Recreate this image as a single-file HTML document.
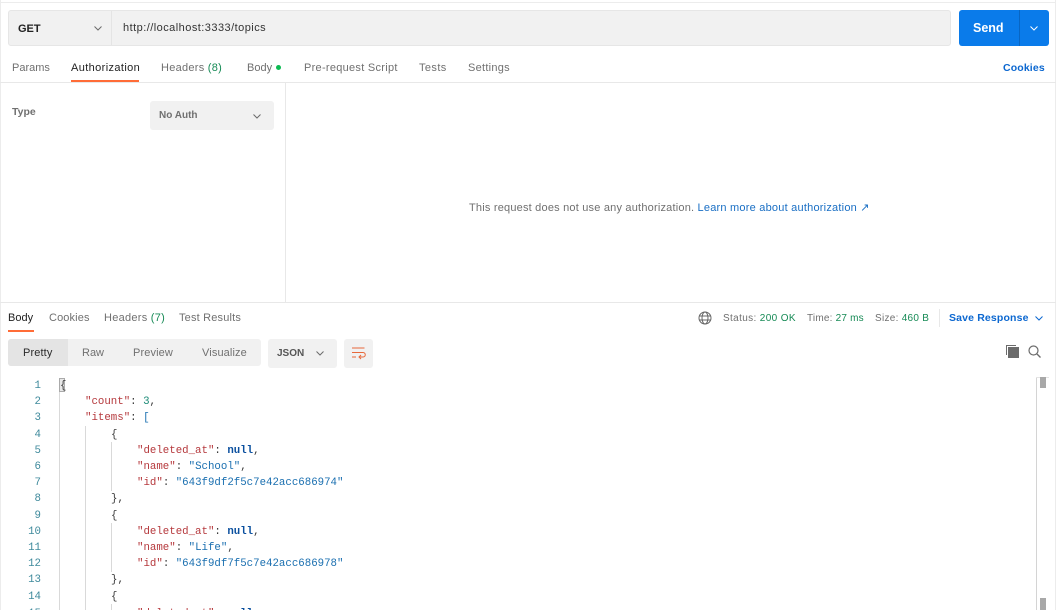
<!DOCTYPE html>
<html style="overflow:hidden"><head><meta charset="utf-8">
<style>
html,body{margin:0;padding:0;background:#fff}
#w{width:1058px;height:610px;position:relative;overflow:hidden;font-family:"Liberation Sans",sans-serif;font-size:11px;color:#707070}
.a{position:absolute;white-space:nowrap;line-height:14px}
.b{position:absolute}
.g{color:#168a55}
.code{position:absolute;white-space:pre;font-family:"Liberation Mono",monospace;font-size:10.75px;line-height:16px;color:#3a3a3a}
.n{position:absolute;width:41px;text-align:right;white-space:pre;font-family:"Liberation Mono",monospace;font-size:10.75px;line-height:16px;color:#3f8a9c}
.k{color:#b5383c}.s{color:#1a6fb0}.nl{color:#0a4f9e;font-weight:bold}.d{color:#1a8a76}
svg{position:absolute;overflow:visible}
</style></head><body><div id="w">
<div class="b" style="left:0;top:2px;width:1056px;height:1px;background:#ececec"></div>
<div class="b" style="left:1055px;top:0;width:1px;height:610px;background:#ececec"></div>
<div class="b" style="left:0;top:0;width:1px;height:610px;background:#ececec"></div>

<div class="b" style="left:8px;top:10px;width:941px;height:34px;background:#f1f1f1;border:1px solid #e6e6e6;border-radius:3px"></div>
<div class="b" style="left:111px;top:11px;width:1px;height:34px;background:#e4e4e4"></div>
<div class="a" style="left:18px;top:22px;color:#222;font-weight:bold;font-size:11px">GET</div>
<svg style="left:94px;top:26px" width="8" height="5"><path d="M0.5 0.5L4 4L7.5 0.5" fill="none" stroke="#6b6b6b" stroke-width="1"/></svg>
<div class="a" style="left:123px;top:21px;color:#333;font-size:11px;letter-spacing:.46px">http://localhost:3333/topics</div>

<div class="b" style="left:959px;top:10px;width:90px;height:36px;background:#0a7bea;border-radius:3px"></div>
<div class="b" style="left:1019px;top:10px;width:1px;height:36px;background:#0866c4"></div>
<div class="a" style="left:973px;top:21px;color:#fff;font-weight:bold;font-size:12.5px">Send</div>
<svg style="left:1030px;top:26px" width="8" height="5"><path d="M0.5 0.5L4 4L7.5 0.5" fill="none" stroke="#fff" stroke-width="1"/></svg>

<div class="a" style="left:12px;top:61px">Params</div>
<div class="a" style="left:71px;top:61px;color:#222;letter-spacing:.38px">Authorization</div>
<div class="b" style="left:71px;top:80px;width:68px;height:2px;background:#ff6c37"></div>
<div class="a" style="left:161px;top:61px;letter-spacing:.27px">Headers <span class="g">(8)</span></div>
<div class="a" style="left:247px;top:61px">Body</div>
<div class="b" style="left:276px;top:65px;width:5px;height:5px;border-radius:50%;background:#0cbb52"></div>
<div class="a" style="left:304px;top:61px;letter-spacing:.28px">Pre-request Script</div>
<div class="a" style="left:419px;top:61px;letter-spacing:.4px">Tests</div>
<div class="a" style="left:468px;top:61px;letter-spacing:.27px">Settings</div>
<div class="a" style="left:1003px;top:61px;color:#0b67d0;font-weight:bold;font-size:10.5px;letter-spacing:.14px">Cookies</div>

<div class="b" style="left:0;top:82px;width:1056px;height:1px;background:#e8e8e8"></div>
<div class="b" style="left:285px;top:83px;width:1px;height:219px;background:#e8e8e8"></div>

<div class="a" style="left:12px;top:105px;font-weight:bold;font-size:10.5px">Type</div>
<div class="b" style="left:150px;top:101px;width:124px;height:29px;background:#f1f1f1;border-radius:3px"></div>
<div class="a" style="left:159px;top:109px;font-weight:bold;font-size:10px">No Auth</div>
<svg style="left:253px;top:114px" width="8" height="5"><path d="M0.5 0.5L4 4L7.5 0.5" fill="none" stroke="#6b6b6b" stroke-width="1"/></svg>

<div class="a" style="left:469px;top:201px;letter-spacing:.2px">This request does not use any authorization. <span style="color:#1a6fc4;letter-spacing:.22px">Learn more about authorization ↗</span></div>

<div class="b" style="left:0;top:302px;width:1056px;height:1px;background:#e8e8e8"></div>

<div class="a" style="left:8px;top:311px;color:#222">Body</div>
<div class="b" style="left:8px;top:330px;width:26px;height:2px;background:#ff6c37"></div>
<div class="a" style="left:49px;top:311px;letter-spacing:.12px">Cookies</div>
<div class="a" style="left:104px;top:311px;letter-spacing:.27px">Headers <span class="g">(7)</span></div>
<div class="a" style="left:179px;top:311px;letter-spacing:.18px">Test Results</div>

<svg style="left:698px;top:311px" width="14" height="14" viewBox="0 0 14 14"><g fill="none" stroke="#666" stroke-width="1"><circle cx="7" cy="7" r="6"/><ellipse cx="7" cy="7" rx="3" ry="6"/><path d="M1.3 5H12.7M1.3 9H12.7"/></g></svg>
<div class="a" style="left:723px;top:312px;font-size:10px;letter-spacing:.36px">Status: <span class="g">200 OK</span></div>
<div class="a" style="left:807px;top:312px;font-size:10px;letter-spacing:.2px">Time: <span class="g">27 ms</span></div>
<div class="a" style="left:875px;top:312px;font-size:10px;letter-spacing:.28px">Size: <span class="g">460 B</span></div>
<div class="b" style="left:939px;top:309px;width:1px;height:18px;background:#e8e8e8"></div>
<div class="a" style="left:949px;top:311px;color:#0b67d0;font-weight:bold;font-size:10.5px;letter-spacing:.15px">Save Response</div>
<svg style="left:1035px;top:316px" width="8" height="5"><path d="M0.5 0.5L4 4L7.5 0.5" fill="none" stroke="#0b67d0" stroke-width="1"/></svg>

<div class="b" style="left:8px;top:339px;width:253px;height:27px;background:#f1f1f1;border-radius:3px"></div>
<div class="b" style="left:8px;top:339px;width:60px;height:27px;background:#e4e4e4;border-radius:3px 0 0 3px"></div>
<div class="a" style="left:23px;top:346px;color:#2a2a2a;letter-spacing:.12px">Pretty</div>
<div class="a" style="left:82px;top:346px">Raw</div>
<div class="a" style="left:133px;top:346px;letter-spacing:.12px">Preview</div>
<div class="a" style="left:202px;top:346px;letter-spacing:.12px">Visualize</div>
<div class="b" style="left:268px;top:339px;width:69px;height:29px;background:#f1f1f1;border-radius:3px"></div>
<div class="a" style="left:277px;top:347px;font-weight:bold;font-size:10px;color:#555">JSON</div>
<svg style="left:316px;top:351px" width="8" height="5"><path d="M0.5 0.5L4 4L7.5 0.5" fill="none" stroke="#6b6b6b" stroke-width="1"/></svg>
<div class="b" style="left:344px;top:339px;width:29px;height:29px;background:#f1f1f1;border-radius:3px"></div>
<svg style="left:351px;top:347px" width="15" height="13" viewBox="0 0 15 13"><path d="M1 1H13.5M1 5.5H12C15 5.5 15 10 12 10H8M10 8L8 10L10 12M1 10H5" fill="none" stroke="#e8683a" stroke-width="1"/></svg>

<svg style="left:1006px;top:345px" width="14" height="14" viewBox="0 0 14 14"><path d="M0.5 10V0.5H10" fill="none" stroke="#6b6b6b" stroke-width="1"/><rect x="2" y="2" width="11" height="11" fill="#6b6b6b"/></svg>
<svg style="left:1028px;top:345px" width="13" height="13" viewBox="0 0 13 13"><circle cx="5.5" cy="5.5" r="4.5" fill="none" stroke="#6b6b6b" stroke-width="1.2"/><path d="M9 9L12.5 12.5" stroke="#6b6b6b" stroke-width="1.3"/></svg>

<div class="b" style="left:59px;top:378px;width:1px;height:232px;background:#d9d9d9"></div>
<div class="b" style="left:85px;top:426px;width:1px;height:184px;background:#d9d9d9"></div>
<div class="b" style="left:111px;top:442px;width:1px;height:49px;background:#d9d9d9"></div>
<div class="b" style="left:111px;top:523px;width:1px;height:49px;background:#d9d9d9"></div>
<div class="b" style="left:111px;top:604px;width:1px;height:6px;background:#d9d9d9"></div>
<div class="b" style="left:59px;top:378px;width:6px;height:14px;background:#e8e8e8;box-shadow:inset 0 0 0 1px #aaa"></div>

<div class="n" style="top:378px">1</div>
<div class="n" style="top:394px">2</div>
<div class="n" style="top:410px">3</div>
<div class="n" style="top:427px">4</div>
<div class="n" style="top:443px">5</div>
<div class="n" style="top:459px">6</div>
<div class="n" style="top:475px">7</div>
<div class="n" style="top:491px">8</div>
<div class="n" style="top:508px">9</div>
<div class="n" style="top:524px">10</div>
<div class="n" style="top:540px">11</div>
<div class="n" style="top:556px">12</div>
<div class="n" style="top:572px">13</div>
<div class="n" style="top:589px">14</div>
<div class="n" style="top:606px">15</div>

<div class="code" style="left:60px;top:378px">{</div>
<div class="code" style="left:85px;top:394px"><span class="k">"count"</span>: <span class="d">3</span>,</div>
<div class="code" style="left:85px;top:410px"><span class="k">"items"</span>: <span class="s">[</span></div>
<div class="code" style="left:111px;top:427px">{</div>
<div class="code" style="left:137px;top:443px"><span class="k">"deleted_at"</span>: <span class="nl">null</span>,</div>
<div class="code" style="left:137px;top:459px"><span class="k">"name"</span>: <span class="s">"School"</span>,</div>
<div class="code" style="left:137px;top:475px"><span class="k">"id"</span>: <span class="s">"643f9df2f5c7e42acc686974"</span></div>
<div class="code" style="left:111px;top:491px">},</div>
<div class="code" style="left:111px;top:508px">{</div>
<div class="code" style="left:137px;top:524px"><span class="k">"deleted_at"</span>: <span class="nl">null</span>,</div>
<div class="code" style="left:137px;top:540px"><span class="k">"name"</span>: <span class="s">"Life"</span>,</div>
<div class="code" style="left:137px;top:556px"><span class="k">"id"</span>: <span class="s">"643f9df7f5c7e42acc686978"</span></div>
<div class="code" style="left:111px;top:572px">},</div>
<div class="code" style="left:111px;top:589px">{</div>
<div class="code" style="left:137px;top:606px"><span class="k">"deleted_at"</span>: <span class="nl">null</span>,</div>

<div class="b" style="left:1036px;top:377px;width:1px;height:233px;background:#d4d4d4"></div>
<div class="b" style="left:1036px;top:377px;width:13px;height:1px;background:#e4e4e4"></div>
<div class="b" style="left:1040px;top:377px;width:6px;height:11px;background:#a8a8a8"></div>
<div class="b" style="left:1040px;top:598px;width:6px;height:12px;background:#a8a8a8"></div>
</div></body></html>
